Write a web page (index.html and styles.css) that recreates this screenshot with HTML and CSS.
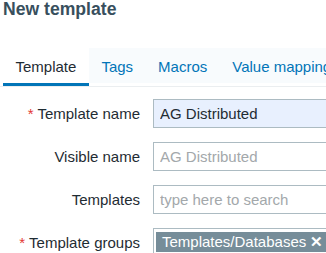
FILE: index.html
```html
<!DOCTYPE html>
<html lang="en">
<head>
    <meta charset="UTF-8">
    <meta name="viewport" content="width=device-width, initial-scale=1.0">
    <title>New template</title>
    <link rel="stylesheet" href="styles.css">
</head>
<body>
    <h1 class="page-title">New template</h1>

    <div class="tabs">
        <ul class="tabs-nav">
            <li class="tab active">Template</li>
            <li class="tab">Tags</li>
            <li class="tab">Macros</li>
            <li class="tab">Value mapping</li>
        </ul>
    </div>

    <form class="form-grid">
        <label class="form-label" for="template-name"><span class="required">*</span> Template name</label>
        <input class="form-input autofilled" type="text" id="template-name" value="AG Distributed">

        <label class="form-label" for="visible-name">Visible name</label>
        <input class="form-input" type="text" id="visible-name" placeholder="AG Distributed">

        <label class="form-label" for="templates">Templates</label>
        <input class="form-input" type="text" id="templates" placeholder="type here to search">

        <label class="form-label"><span class="required">*</span> Template groups</label>
        <div class="multiselect">
            <span class="ms-tag">Templates/Databases <span class="ms-remove">✕</span></span>
        </div>
    </form>
</body>
</html>
```

FILE: styles.css
```css
html, body {
    overflow: hidden;
}
body {
    margin: 0;
    font-family: "Liberation Sans", Arial, sans-serif;
    font-size: 15px;
    color: #1f2c33;
    background: #ffffff;
}
.page-title {
    margin: 0;
    padding-left: 3px;
    font-size: 17.6px;
    line-height: 18px;
    font-weight: bold;
    color: #384f5d;
}
.tabs {
    margin-top: 30px;
    border-bottom: 1px solid #ebeef0;
    width: 600px;
}
.tabs-nav {
    display: flex;
    margin: 0 0 0 3px;
    padding: 0;
    list-style: none;
    background: #f8fbfd;
}
.tab {
    padding: 10px 12.5px 8px;
    line-height: 17px;
    color: #0275b8;
    border-bottom: 3px solid #ffffff;
    white-space: nowrap;
}
.tab.active {
    color: #1f2c33;
    background: #ffffff;
    border-bottom-color: #0275b8;
}
.form-grid {
    display: grid;
    grid-template-columns: 140px 400px;
    align-items: start;
    column-gap: 13px;
    row-gap: 14px;
    padding-top: 12px;
    margin: 0;
}
.form-label {
    display: flex;
    align-items: center;
    justify-content: flex-end;
    height: 29px;
    white-space: pre;
}
.required {
    color: #e33734;
}
.form-input {
    box-sizing: border-box;
    height: 29px;
    margin: 0;
    padding: 0 6px;
    border: 1px solid #acbbc2;
    font-family: inherit;
    font-size: 15px;
    color: #1f2c33;
    background: #ffffff;
    outline: none;
}
.form-input::placeholder {
    color: #a3a8ab;
}
.form-input.autofilled {
    background: #e8f0fe;
}
.multiselect {
    box-sizing: border-box;
    min-height: 29px;
    padding: 3px 2px;
    border: 1px solid #acbbc2;
}
.ms-tag {
    display: inline-block;
    padding: 2px 3px 2px 6px;
    line-height: 16px;
    color: #ffffff;
    background: #768d99;
    white-space: nowrap;
}
.ms-remove {
    font-weight: bold;
}
```
